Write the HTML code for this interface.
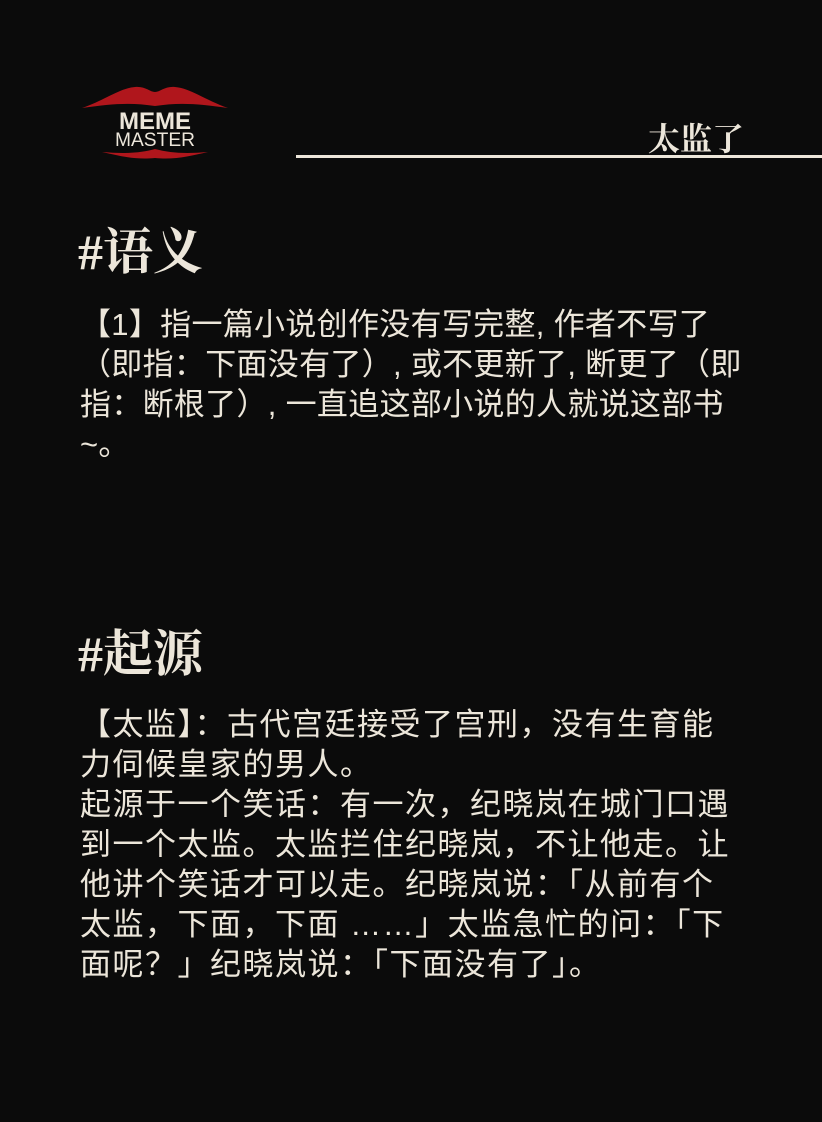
<!DOCTYPE html>
<html><head><meta charset="utf-8"><style>
html,body{margin:0;padding:0;}
body{width:822px;height:1122px;background:#0b0b0b;position:relative;overflow:hidden;font-family:"Liberation Sans","Noto Sans CJK SC",sans-serif;color:#ece6da;}
.abs{position:absolute;white-space:nowrap;}
h2{position:absolute;margin:0;font-family:"Liberation Serif","Noto Serif CJK SC",serif;font-weight:bold;font-size:50px;left:78px;color:#ece6da;line-height:1.2;}
.p{position:absolute;left:80px;font-size:31px;line-height:40px;white-space:nowrap;}
</style></head><body>
<svg class="abs" style="left:80px;top:82px" width="150" height="82" viewBox="0 0 150 82">
<path d="M2 26 C25 18 40 6 55 5 C65 4 70 10 75 10 C80 10 85 4 95 5 C110 6 125 18 148 26 C120 22 100 20 75 24 C50 20 30 22 2 26Z" fill="#b0161c"/>
<path d="M22 70 C45 72 60 71 75 67 C90 71 105 72 128 70 C110 74 95 78 75 76 C55 78 40 74 22 70Z" fill="#b0161c"/>
<text x="75" y="47" text-anchor="middle" font-family="Liberation Sans,sans-serif" font-weight="bold" font-size="24" fill="#ece6da">MEME</text>
<text x="75" y="64" text-anchor="middle" font-family="Liberation Sans,sans-serif" font-size="19" fill="#ece6da" textLength="80" lengthAdjust="spacingAndGlyphs">MASTER</text>
</svg>
<div class="abs" style="left:648px;top:114px;font-family:'Liberation Serif','Noto Serif CJK SC',serif;font-weight:bold;font-size:32px;">太监了</div>
<div class="abs" style="left:296px;top:155px;width:526px;height:3px;background:#ece6da"></div>
<h2 style="top:222px">#语义</h2>
<div class="p" style="top:305px;letter-spacing:0.3px">【1】指一篇小说创作没有写完整, 作者不写了<br>（即指：下面没有了）, 或不更新了, 断更了（即<br>指：断根了）, 一直追这部小说的人就说这部书<br>~。</div>
<h2 style="top:624px">#起源</h2>
<div class="p" style="top:705px;letter-spacing:1.5px">【太监】：古代宫廷接受了宫刑，没有生育能<br>力伺候皇家的男人。<br>起源于一个笑话：有一次，纪晓岚在城门口遇<br>到一个太监。太监拦住纪晓岚，不让他走。让<br>他讲个笑话才可以走。纪晓岚说：「从前有个<br>太监，下面，下面 ……」太监急忙的问：「下<br>面呢？」纪晓岚说：「下面没有了」。</div>
</body></html>
